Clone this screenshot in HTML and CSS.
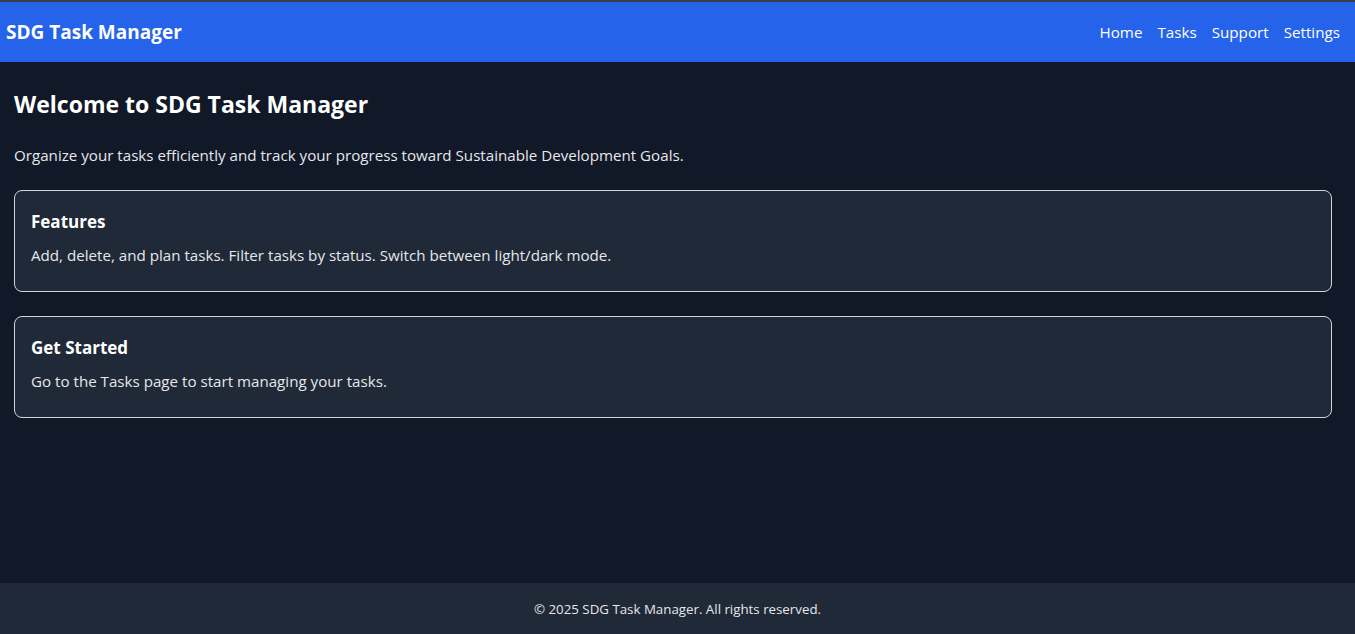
FILE: index.html
```html
<!DOCTYPE html>
<html lang="en">
<head>
<meta charset="utf-8">
<title>SDG Task Manager</title>
<link rel="stylesheet" href="styles.css">
</head>
<body>
<div class="page">
  <header class="topbar">
    <div class="brand">SDG Task Manager</div>
    <nav class="nav">
      <a href="#" class="nav-link">Home</a>
      <a href="#" class="nav-link">Tasks</a>
      <a href="#" class="nav-link">Support</a>
      <a href="#" class="nav-link">Settings</a>
    </nav>
  </header>
  <main class="main">
    <h1 class="title">Welcome to SDG Task Manager</h1>
    <p class="lead">Organize your tasks efficiently and track your progress toward Sustainable Development Goals.</p>
    <section class="card">
      <h2 class="card-title">Features</h2>
      <p class="card-text">Add, delete, and plan tasks. Filter tasks by status. Switch between light/dark mode.</p>
    </section>
    <section class="card">
      <h2 class="card-title">Get Started</h2>
      <p class="card-text">Go to the Tasks page to start managing your tasks.</p>
    </section>
  </main>
  <footer class="footer">© 2025 SDG Task Manager. All rights reserved.</footer>
</div>
</body>
</html>
```

FILE: styles.css
```css
* { box-sizing: border-box; }
html, body { margin: 0; padding: 0; height: 100%; }
body {
  background: #111827;
  color: #e5e7eb;
  font-family: "Open Sans", "Noto Sans", sans-serif;
  border-top: 2px solid #3a3f47;
}
.page {
  min-height: 632px;
  display: flex;
  flex-direction: column;
}
.topbar {
  height: 60px;
  background: #2563eb;
  display: flex;
  align-items: center;
  justify-content: space-between;
  padding: 0 15px 0 6px;
}
.brand {
  color: #fff;
  font-size: 19px;
  font-weight: 700;
}
.nav {
  display: flex;
  gap: 15px;
}
.nav-link {
  color: #fff;
  text-decoration: none;
  font-size: 15.2px;
}
.main {
  flex: 1;
  padding: 26px 23px 24px 14px;
}
.title {
  margin: 0 0 23px;
  font-size: 23px;
  font-weight: 700;
  color: #fff;
  line-height: 32px;
}
.lead {
  margin: 0 0 23px;
  font-size: 15.15px;
  line-height: 24px;
  color: #e5e7eb;
}
.card {
  background: #1f2937;
  border: 1px solid #d1d5db;
  border-radius: 8px;
  padding: 18px 16px 24px;
  margin-bottom: 24px;
  height: 102px;
}
.card-title {
  margin: 0 0 8px;
  font-size: 17px;
  font-weight: 700;
  color: #fff;
  line-height: 26px;
}
.card-text {
  margin: 0;
  font-size: 15.15px;
  line-height: 24px;
  color: #e5e7eb;
}
.footer {
  height: 51px;
  background: #1f2937;
  display: flex;
  align-items: center;
  justify-content: center;
  font-size: 13.3px;
  color: #e5e7eb;
}
```
